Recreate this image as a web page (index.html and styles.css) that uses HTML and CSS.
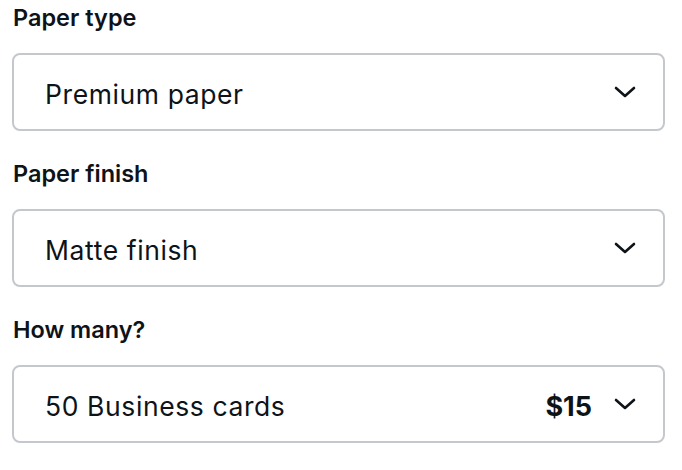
FILE: index.html
```html
<!DOCTYPE html>
<html>
<head>
<meta charset="utf-8">
<link rel="stylesheet" href="styles.css">
</head>
<body>
<div class="form">
  <div class="field">
    <div class="label">Paper type</div>
    <div class="select">
      <span class="value">Premium paper</span>
      <span class="right">
        <svg class="chev" width="22" height="12" viewBox="0 0 22 12"><path d="M2 2l9 8 9-8" fill="none" stroke="#0e1318" stroke-width="2.6" stroke-linecap="round" stroke-linejoin="round"/></svg>
      </span>
    </div>
  </div>
  <div class="field">
    <div class="label">Paper finish</div>
    <div class="select">
      <span class="value">Matte finish</span>
      <span class="right">
        <svg class="chev" width="22" height="12" viewBox="0 0 22 12"><path d="M2 2l9 8 9-8" fill="none" stroke="#0e1318" stroke-width="2.6" stroke-linecap="round" stroke-linejoin="round"/></svg>
      </span>
    </div>
  </div>
  <div class="field">
    <div class="label">How many?</div>
    <div class="select">
      <span class="value">50 Business cards</span>
      <span class="right">
        <span class="price">$15</span>
        <svg class="chev" width="22" height="12" viewBox="0 0 22 12"><path d="M2 2l9 8 9-8" fill="none" stroke="#0e1318" stroke-width="2.6" stroke-linecap="round" stroke-linejoin="round"/></svg>
      </span>
    </div>
  </div>
</div>
</body>
</html>
```
FILE: styles.css
```css
html, body {
  margin: 0;
  padding: 0;
  background: #ffffff;
}
body {
  font-family: Inter, "Noto Sans", sans-serif;
  color: #0e1318;
}
.form {
  display: flex;
  flex-direction: column;
  gap: 29px;
  padding: 4px 17px 0 12px;
}
.field {
  display: flex;
  flex-direction: column;
  gap: 21px;
}
.label {
  font-size: 23.5px;
  font-weight: 600;
  line-height: 28px;
  padding-left: 1px;
}
.select {
  box-sizing: border-box;
  height: 78px;
  border: 2px solid #c4c8cc;
  border-radius: 8px;
  display: flex;
  align-items: center;
  justify-content: space-between;
  padding: 0 27px 0 31px;
}
.value {
  font-size: 26.5px;
  letter-spacing: 0.6px;
  font-weight: 400;
  padding-top: 4px;
}
.right {
  display: flex;
  align-items: center;
  gap: 22px;
}
.price {
  font-size: 27px;
  font-weight: 700;
  padding-top: 4px;
}
.chev {
  display: block;
}
```
